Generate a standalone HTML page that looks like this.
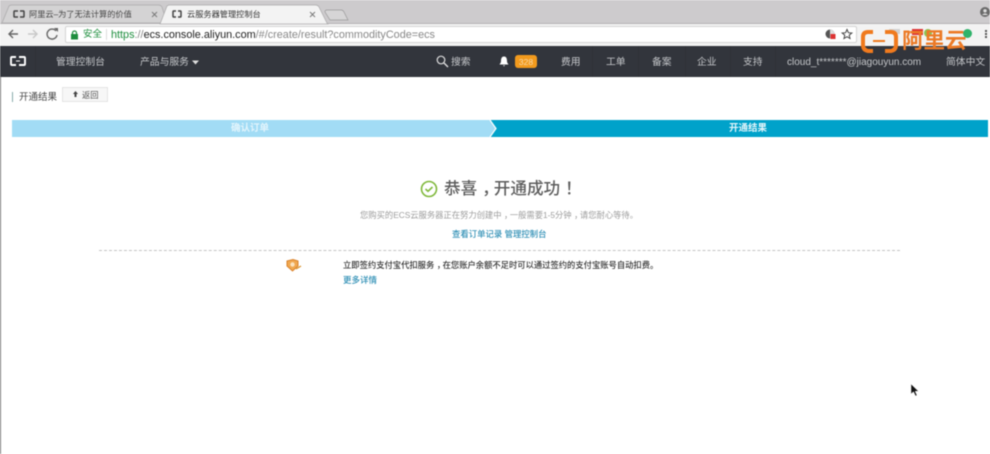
<!DOCTYPE html>
<html lang="zh"><head><meta charset="utf-8"><title>开通结果</title>
<style>
html,body{margin:0;padding:0;background:#fff;width:990px;height:454px;overflow:hidden}
#p{position:relative;width:990px;height:454px;overflow:hidden;font-family:"Liberation Sans","Noto Sans CJK SC",sans-serif;filter:blur(.4px)}
#p div,#p svg{position:absolute}
.t{position:absolute;white-space:nowrap;line-height:14px}
.n{top:55.5px;font-size:9.8px;color:#c4c6c9}
.sep{top:46px;width:1px;height:31px;background:#2e3137}
.c{position:relative;left:.3em}
</style></head><body><div id="p">
<div style="left:0;top:0;width:990px;height:23px;background:#cdcbcd"></div>
<div style="left:0;top:23px;width:990px;height:23px;background:#f3f3f3;border-top:1px solid #b5b3b5;box-sizing:border-box"></div>
<svg style="left:0;top:0" width="350" height="25" viewBox="0 0 350 25">
<path d="M2 23 L9 6 Q10 5 12 5 L158 5 Q161 5 162 7 L167 23Z" fill="#d4d3d4" stroke="#aaa9aa" stroke-width=".7"/>
<path d="M160 24 L167 6 Q168 5 170 5 L315 5 Q318 5 319 7 L327 23 L328 24Z" fill="#f3f3f3" stroke="#aaa9aa" stroke-width=".7"/>
<path d="M330 20 L325 12 Q325 10 327 10 L341 10 Q343 10 344 12 L348 20Z" fill="#d6d5d6" stroke="#999" stroke-width=".7"/>
<g stroke="#777" stroke-width=".9" fill="none"><path d="M152 12l5 5M157 12l-5 5M310 12l5 5M315 12l-5 5"/></g>
<g stroke="#444" stroke-width="1.500" fill="none"><path d="M18 11H14.500Q14 11 14 12V16Q14 17 14.500 17H18M20 11H23.500Q24 11 24 12V16Q24 17 23.500 17H20M176 11H173.500Q173 11 173 12V16Q173 17 173.500 17H176M178 11H180.500Q181 11 181 12V16Q181 17 180.500 17H178"/></g>
</svg>
<span class="t" style="left:29px;top:8px;font-size:8.200px;color:#444">阿里云–为了无法计算的价值</span>
<span class="t" style="left:187px;top:8px;font-size:8.200px;color:#333">云服务器管理控制台</span>
<svg style="left:0;top:24px" width="70" height="22" viewBox="0 0 70 22">
<g fill="none" stroke="#666" stroke-width="1.400"><path d="M18 10H9M13 6L9 10L13 14"/></g>
<g fill="none" stroke="#c8c8c8" stroke-width="1.400"><path d="M28 10H37M33 6L37 10L33 14"/></g>
<path d="M56 7A5 5 0 1 0 57 11" fill="none" stroke="#666" stroke-width="1.400"/><path d="M54 4L58 4L58 8Z" fill="#666"/>
</svg>
<div style="left:65px;top:26px;width:792px;height:17px;background:#fff;border:1px solid #d4d4d4;box-sizing:border-box;border-radius:2px"></div>
<svg style="left:70px;top:30px" width="9" height="10" viewBox="0 0 9 10"><rect x="1" y="4" width="7" height="5.500" fill="#1e8e3e"/><path d="M2.500 4.500V3A2 2 0 0 1 6.500 3V4.500" fill="none" stroke="#1e8e3e" stroke-width="1.200"/></svg>
<span class="t" style="left:83px;top:27.500px;font-size:9.500px;color:#1e8e3e">安全</span>
<div style="left:106px;top:29px;width:1px;height:11px;background:#ddd"></div>
<span class="t" style="left:111px;top:27.500px;font-size:10.850px;color:#888"><span style="color:#1e8e3e">https</span>://<span style="color:#222">ecs.console.aliyun.com</span>/#/create/result?commodityCode=ecs</span>
<svg style="left:824px;top:28px" width="30" height="13" viewBox="0 0 30 13"><circle cx="6" cy="6" r="4.500" fill="#555"/><path d="M6 1.500A4.500 4.500 0 0 1 6 10.500Z" fill="#ddd"/><rect x="6.500" y="6" width="5" height="5" fill="#d33"/><path d="M23 1.500l1.400 3.200 3.400.3-2.600 2.200.8 3.300-3-1.800-3 1.800.8-3.300-2.600-2.200 3.400-.3z" fill="none" stroke="#444"/></svg>
<svg style="left:980px;top:7px" width="10" height="10" viewBox="0 0 10 10"><circle cx="5" cy="5" r="5" fill="#6a6a6a"/><circle cx="5" cy="3.800" r="1.700" fill="#ddd"/><path d="M2 8Q5 4.800 8 8Z" fill="#ddd"/></svg>
<div style="left:985px;top:30px;width:2px;height:2px;background:#555;box-shadow:0 3px #555,0 6px #555"></div>
<div style="left:0;top:46px;width:990px;height:31px;background:#32353c"></div>
<div class="sep" style="left:35px"></div><div class="sep" style="left:592px"></div><div class="sep" style="left:638px"></div><div class="sep" style="left:685px"></div><div class="sep" style="left:730px"></div><div class="sep" style="left:775px"></div>
<svg style="left:9px;top:55px" width="18" height="12" viewBox="0 0 18 12"><g fill="none" stroke="#fff" stroke-width="1.900"><path d="M7 2H3Q2 2 2 3V9Q2 10 3 10H7M10 2H15Q16 2 16 3V9Q16 10 15 10H10"/><path d="M7 6H11" stroke-width="1"/></g></svg>
<span class="t n" style="left:56px">管理控制台</span>
<span class="t n" style="left:140px">产品与服务</span>
<svg style="left:192px;top:60px" width="7" height="5" viewBox="0 0 7 5"><path d="M0 .5H7L3.500 4.500Z" fill="#ddd"/></svg>
<svg style="left:436px;top:55px" width="13" height="13" viewBox="0 0 13 13"><circle cx="5" cy="5" r="3.800" fill="none" stroke="#ddd" stroke-width="1.200"/><path d="M8 8L12 12" stroke="#ddd" stroke-width="1.400"/></svg>
<span class="t n" style="left:451px">搜索</span>
<svg style="left:499px;top:56px" width="10" height="11" viewBox="0 0 10 11"><path d="M5 0.500C7.500 .5 8 3 8 5C8 7 9 7.500 9.500 8.500H.5C1 7.500 2 7 2 5C2 3 2.500 .5 5 .5ZM4 9.300H6L5 10.500Z" fill="#fff"/></svg>
<div style="left:515px;top:55px;width:22px;height:13px;background:#f29a1d;border-radius:3px"></div>
<span class="t" style="left:515px;top:55px;width:22px;text-align:center;font-size:8.500px;color:#f8d9a8">328</span>
<span class="t n" style="left:561px">费用</span>
<span class="t n" style="left:606px">工单</span>
<span class="t n" style="left:652px">备案</span>
<span class="t n" style="left:697px">企业</span>
<span class="t n" style="left:743px">支持</span>
<span class="t n" style="left:787px;font-size:10px">cloud_t*******@jiagouyun.com</span>
<span class="t n" style="left:946px">简体中文</span>
<svg style="left:860px;top:26px" width="112" height="30" viewBox="0 0 112 30">
<rect x="29" y="3" width="11" height="5" fill="#bbb" opacity=".6"/><rect x="52" y="3" width="11" height="6" fill="#d33"/>
<g fill="none" stroke="#f07a1e" stroke-width="4"><path d="M13 6H8Q3 6 3 11V19Q3 24 8 25H13"/><path d="M25 6H31Q36 6 36 11V19Q36 24 31 25H25"/></g><path d="M13 15H25" stroke="#f07a1e" stroke-width="2"/>
</svg>
<div style="left:963px;top:29px;width:9px;height:9px;border-radius:50%;background:#2fb36a"></div>
<div style="left:924px;top:29px;width:8px;height:8px;border-radius:50%;background:#8cc152"></div>
<span class="t" style="left:902px;top:29px;font-size:21.500px;line-height:24px;font-weight:bold;color:#ec7a26">阿里云</span>
<div style="left:12px;top:92px;width:1px;height:10px;background:#8aa"></div>
<span class="t" style="left:19px;top:91px;font-size:9.500px;color:#444">开通结果</span>
<div style="left:62px;top:87px;width:46px;height:15px;background:#f7f7f7;border:1px solid #e4e4e4;box-sizing:border-box"></div>
<svg style="left:73px;top:91px" width="5" height="7" viewBox="0 0 5 7"><path d="M2.500 0L5 3H3.500V6H1.500V3H0Z" fill="#444"/></svg>
<span class="t" style="left:82px;top:88px;font-size:8.300px;color:#555">返回</span>
<svg style="left:12px;top:120px" width="976" height="17" viewBox="0 0 976 17"><rect width="976" height="17" fill="#00a2ca"/><path d="M0 0H478L484 8.500L478 17H0Z" fill="#a2dcf5"/><path d="M478 0L484 8.500L478 17" fill="none" stroke="#fff" stroke-width="1.200"/></svg>
<span class="t" style="left:231px;top:122px;font-size:9.500px;font-weight:bold;color:#e4f5fc">确认订单</span>
<span class="t" style="left:729px;top:122px;font-size:9.500px;font-weight:bold;color:#e6f6fb">开通结果</span>
<svg style="left:420px;top:180px" width="18" height="18" viewBox="0 0 18 18"><circle cx="9" cy="9" r="7.500" fill="none" stroke="#7fb83a" stroke-width="1.600"/><path d="M5.500 9L8 11.300L12.500 7" fill="none" stroke="#7fb83a" stroke-width="1.600"/></svg>
<span class="t" style="left:444px;top:179px;font-size:16.600px;line-height:20px;font-weight:500;color:#5d5d5d">恭喜<span class="c">，</span>开通成功<span class="c">！</span></span>
<span class="t" style="left:360px;top:207.500px;font-size:8.300px;color:#9c9c9c">您购买的ECS云服务器正在努力创建中<span class="c">，</span>一般需要1-5分钟<span class="c">，</span>请您耐心等待。</span>
<span class="t" style="left:452px;top:227px;font-size:8.400px;font-weight:500;color:#2f8fb5">查看订单记录 管理控制台</span>
<div style="left:99px;top:250px;width:801px;border-top:1px dashed #c4c4c4"></div>
<svg style="left:286px;top:259px" width="16" height="13" viewBox="0 0 16 13"><path d="M1 2L7 .5L12 2L12 7L6.500 12L1 7Z" fill="#f0a850" stroke="#d9822b"/><circle cx="6.500" cy="5.500" r="2.200" fill="#fbe3c0"/><path d="M10 10L15 7" stroke="#d9922b" stroke-width="1.300"/></svg>
<span class="t" style="left:343px;top:258px;font-size:8.300px;font-weight:500;color:#333">立即签约支付宝代扣服务<span class="c">，</span>在您账户余额不足时可以通过签约的支付宝账号自动扣费。</span>
<span class="t" style="left:343px;top:273px;font-size:8.500px;font-weight:500;color:#2f8fb5">更多详情</span>
<svg style="left:909px;top:383px" width="11" height="14" viewBox="0 0 11 14"><path d="M2 1V11L4.500 8.800L6.500 13L8 12.300L6.200 8.300H9.500Z" fill="#111" stroke="#eee" stroke-width=".5"/></svg>
<div style="left:0;top:77px;width:1px;height:377px;background:#777"></div>
</div></body></html>
